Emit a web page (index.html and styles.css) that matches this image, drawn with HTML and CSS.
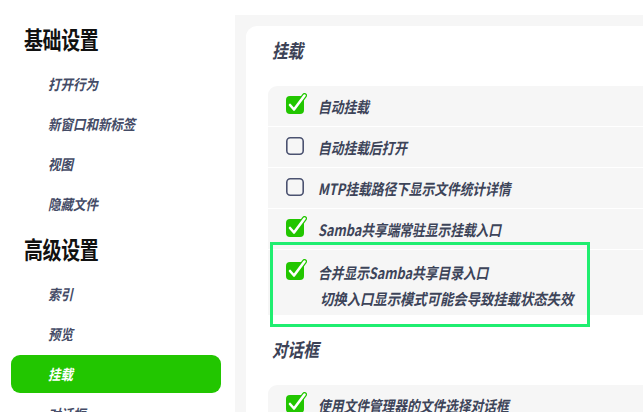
FILE: index.html
```html
<!DOCTYPE html>
<html lang="zh-CN">
<head>
    <meta charset="UTF-8">
    <meta name="viewport" content="width=device-width, initial-scale=1.0">
    <title>设置 - 挂载</title>
    <link rel="stylesheet" href="styles.css">
</head>
<body>

<nav class="sidebar">
    <h2 class="side-title">基础设置</h2>
    <a class="side-item"><span>打开行为</span></a>
    <a class="side-item"><span>新窗口和新标签</span></a>
    <a class="side-item"><span>视图</span></a>
    <a class="side-item"><span>隐藏文件</span></a>

    <h2 class="side-title second">高级设置</h2>
    <a class="side-item"><span>索引</span></a>
    <a class="side-item"><span>预览</span></a>
    <a class="side-item active"><span>挂载</span></a>
    <a class="side-item"><span>对话框</span></a>
</nav>

<main class="main">
    <div class="card">
        <h3 class="section-title">挂载</h3>
        <div class="group">
            <div class="row">
                <svg class="box" viewBox="0 0 22 22"><rect x="1" y="3" width="18" height="18" rx="4" fill="#22c600"/><path d="M5 12 L9 16.5 L19.5 2.5" fill="none" stroke="#22c600" stroke-width="5" stroke-linecap="round" stroke-linejoin="round"/><path d="M5 12 L9 16.5 L19.5 2.5" fill="none" stroke="#fff" stroke-width="2.6" stroke-linecap="round" stroke-linejoin="round"/></svg>
                <span class="label">自动挂载</span>
            </div>
            <div class="row">
                <svg class="box" viewBox="0 0 22 22"><rect x="1.8" y="3.8" width="16.4" height="16.4" rx="3.5" fill="none" stroke="#4b5270" stroke-width="1.6"/></svg>
                <span class="label">自动挂载后打开</span>
            </div>
            <div class="row">
                <svg class="box" viewBox="0 0 22 22"><rect x="1.8" y="3.8" width="16.4" height="16.4" rx="3.5" fill="none" stroke="#4b5270" stroke-width="1.6"/></svg>
                <span class="label">MTP挂载路径下显示文件统计详情</span>
            </div>
            <div class="row">
                <svg class="box" viewBox="0 0 22 22"><rect x="1" y="3" width="18" height="18" rx="4" fill="#22c600"/><path d="M5 12 L9 16.5 L19.5 2.5" fill="none" stroke="#22c600" stroke-width="5" stroke-linecap="round" stroke-linejoin="round"/><path d="M5 12 L9 16.5 L19.5 2.5" fill="none" stroke="#fff" stroke-width="2.6" stroke-linecap="round" stroke-linejoin="round"/></svg>
                <span class="label">Samba共享端常驻显示挂载入口</span>
            </div>
            <div class="row tall">
                <div class="row-line">
                    <svg class="box" viewBox="0 0 22 22"><rect x="1" y="3" width="18" height="18" rx="4" fill="#22c600"/><path d="M5 12 L9 16.5 L19.5 2.5" fill="none" stroke="#22c600" stroke-width="5" stroke-linecap="round" stroke-linejoin="round"/><path d="M5 12 L9 16.5 L19.5 2.5" fill="none" stroke="#fff" stroke-width="2.6" stroke-linecap="round" stroke-linejoin="round"/></svg>
                    <span class="label">合并显示Samba共享目录入口</span>
                </div>
                <div class="desc"><span class="label">切换入口显示模式可能会导致挂载状态失效</span></div>
                <div class="highlight"></div>
            </div>
        </div>

        <h3 class="section-title">对话框</h3>
        <div class="group">
            <div class="row">
                <svg class="box" viewBox="0 0 22 22"><rect x="1" y="3" width="18" height="18" rx="4" fill="#22c600"/><path d="M5 12 L9 16.5 L19.5 2.5" fill="none" stroke="#22c600" stroke-width="5" stroke-linecap="round" stroke-linejoin="round"/><path d="M5 12 L9 16.5 L19.5 2.5" fill="none" stroke="#fff" stroke-width="2.6" stroke-linecap="round" stroke-linejoin="round"/></svg>
                <span class="label">使用文件管理器的文件选择对话框</span>
            </div>
        </div>
    </div>
</main>

</body>
</html>
```

FILE: styles.css
```css
html, body {
    margin: 0;
    height: 100%;
}
body {
    font-family: "Noto Sans CJK SC", "Noto Sans", sans-serif;
    background: #fff;
    display: flex;
    overflow: hidden;
    width: 643px;
    height: 412px;
}
.sidebar {
    width: 235px;
    flex-shrink: 0;
    display: flex;
    flex-direction: column;
    padding-top: 24px;
    box-sizing: border-box;
}
/* the UI font is a narrow one, so squeeze Noto a bit */
.side-title {
    margin: 0 0 11px 24px;
    height: 30px;
    line-height: 30px;
    font-size: 24px;
    font-weight: 700;
    letter-spacing: -0.5px;
    color: #111;
    transform: scaleX(0.79);
    transform-origin: left center;
}
.side-title.second {
    margin-top: 9px;
}
.side-item {
    display: block;
    height: 38px;
    line-height: 38px;
    margin: 0 14px 2px 11px;
    padding-left: 37px;
    border-radius: 9px;
    font-size: 14.5px;
    font-weight: 700;
    font-style: italic;
    color: #444b66;
    flex-shrink: 0;
    white-space: nowrap;
}
.side-item span {
    display: inline-block;
    transform: scaleX(0.86);
    transform-origin: left center;
}
.side-item.active {
    background: #22c600;
    color: #fff;
}
.main {
    flex: 1;
    margin-top: 15px;
    background: #f6f6f6;
    padding: 11px 0 0 11px;
    min-width: 0;
}
.card {
    background: #fff;
    border-radius: 11px 0 0 0;
    padding: 12px 0 0 22px;
    height: 100%;
    width: 600px;
}
.section-title {
    margin: 0 0 24px 4px;
    height: 24px;
    line-height: 24px;
    font-size: 19px;
    font-weight: 700;
    font-style: italic;
    color: #3c4256;
    transform: scaleX(0.82);
    transform-origin: left center;
}
.group {
    background: #f6f6f6;
    border-radius: 9px 0 0 0;
    margin-bottom: 22px;
}
.row {
    height: 40px;
    display: flex;
    align-items: center;
    padding-left: 17px;
    border-bottom: 1px solid #fff;
    position: relative;
}
.row:last-child {
    border-bottom: none;
}
.row.tall {
    height: auto;
    display: block;
    padding-top: 2px;
    padding-bottom: 7px;
}
.row-line {
    height: 40px;
    display: flex;
    align-items: center;
}
.box {
    width: 22px;
    height: 22px;
    margin-right: 11px;
    margin-top: -4px;
    flex-shrink: 0;
}
.label {
    display: inline-block;
    font-size: 15.5px;
    font-weight: 700;
    font-style: italic;
    color: #3d4459;
    white-space: nowrap;
    transform: scaleX(0.82);
    transform-origin: left center;
}
.desc {
    padding-left: 35px;
    margin-top: -4px;
    line-height: 20px;
}
.desc .label {
    transform: scaleX(0.86);
}
.highlight {
    position: absolute;
    left: 2px;
    top: -8px;
    width: 320px;
    height: 85px;
    border: 3px solid #1fee70;
    box-sizing: border-box;
}
```
